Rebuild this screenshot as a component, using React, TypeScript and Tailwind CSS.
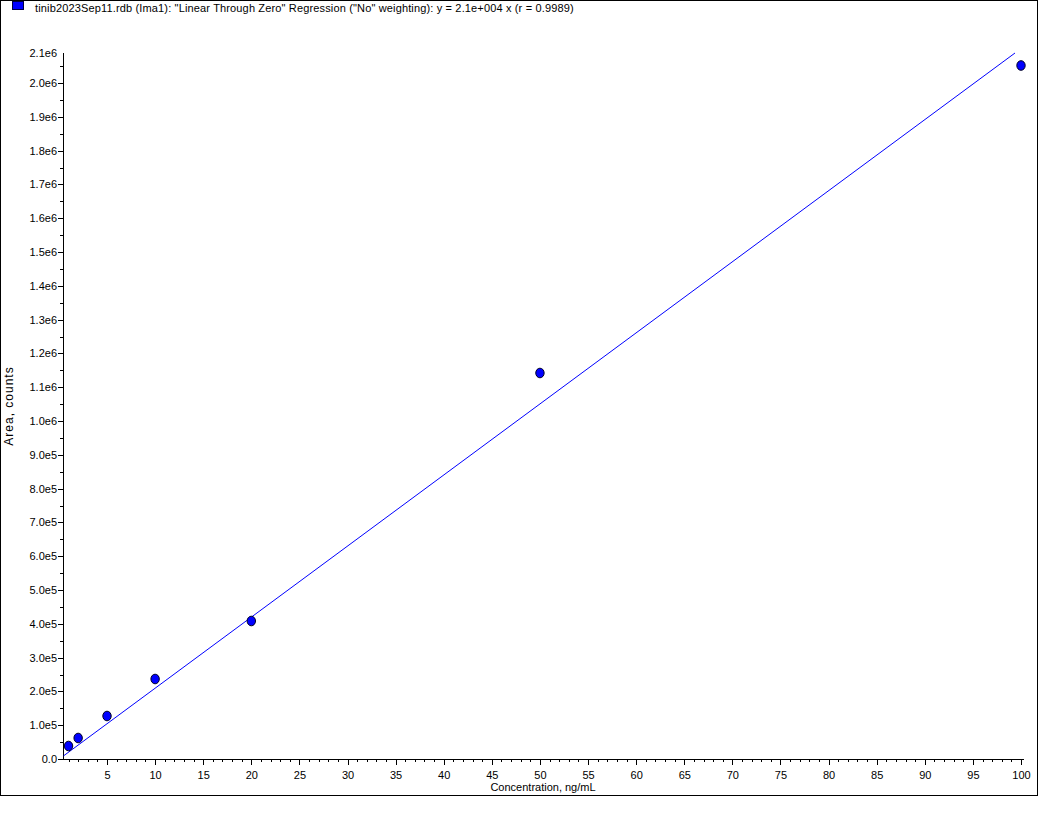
import React from "react";

const X0 = 58.9;
const XS = 9.621;
const Y0 = 759;
const YS = 33.8 / 1e5;
const YTOP = 53;

const px = (c: number) => X0 + c * XS;
const py = (a: number) => Y0 - a * YS;

// measured pixel heights of the calibration points
const points = [
  { c: 1, y: 746 },
  { c: 2, y: 738 },
  { c: 5, y: 716 },
  { c: 10, y: 679 },
  { c: 20, y: 621 },
  { c: 50, y: 373 },
  { c: 100, y: 65.5 },
];

const yLabels = Array.from({ length: 22 }, (_, i) => {
  if (i === 0) return "0.0";
  if (i < 10) return `${i}.0e5`;
  return `${(i / 10).toFixed(1)}e6`;
});

const font = "'Liberation Sans', Arial, sans-serif";

const Chart = () => {
  const minor = Array.from({ length: 100 }, (_, i) => i + 1).filter((c) => c % 5 !== 0);
  const major = Array.from({ length: 20 }, (_, i) => (i + 1) * 5);
  return (
    <svg width={1036} height={779} viewBox="1 16 1036 779" className="block">
      {/* axes */}
      <g stroke="#000" strokeWidth={1} shapeRendering="crispEdges">
        <line x1={63.5} y1={YTOP} x2={63.5} y2={759.5} />
        <line x1={63} y1={759.5} x2={1024} y2={759.5} />
        {yLabels.slice(0, 21).map((_, i) => (
          <line key={`ym${i}`} x1={58} y1={Math.round(py(i * 1e5)) + 0.5} x2={63} y2={Math.round(py(i * 1e5)) + 0.5} />
        ))}
        {yLabels.slice(0, 21).map((_, i) => (
          <line key={`yn${i}`} x1={60} y1={Math.round(py(i * 1e5 + 5e4)) + 0.5} x2={63} y2={Math.round(py(i * 1e5 + 5e4)) + 0.5} />
        ))}
        {minor.map((c) => (
          <line key={`xm${c}`} x1={Math.round(px(c)) + 0.5} y1={760} x2={Math.round(px(c)) + 0.5} y2={762} />
        ))}
        {major.map((c) => (
          <line key={`xM${c}`} x1={Math.round(px(c)) + 0.5} y1={760} x2={Math.round(px(c)) + 0.5} y2={765} />
        ))}
      </g>
      {/* tick labels */}
      <g fill="#000" fontSize={11} style={{ fontFamily: font }}>
        {yLabels.map((l, i) => (
          <text key={l} x={57} y={Math.max(py(i * 1e5), YTOP) + 4} textAnchor="end">
            {l}
          </text>
        ))}
        {major.map((c) => (
          <text key={c} x={px(c) + 0.5} y={779} textAnchor="middle">
            {c}
          </text>
        ))}
        <text x={543} y={791} textAnchor="middle">
          Concentration, ng/mL
        </text>
        <text
          x={13}
          y={406}
          textAnchor="middle"
          transform="rotate(-90 13 406)"
          fontSize={12}
          letterSpacing={1}
        >
          Area, counts
        </text>
      </g>
      {/* regression line */}
      <line x1={63.5} y1={755.9} x2={1015} y2={YTOP} stroke="#0000ff" strokeWidth={1} />
      {/* data points */}
      {points.map((p) => (
        <ellipse key={p.c} cx={px(p.c)} cy={p.y} rx={4.2} ry={4.8} fill="#0000ff" stroke="#000022" strokeWidth={1} />
      ))}
    </svg>
  );
};

export default function App() {
  return (
    <div className="w-[1038px] h-[796px] border border-black bg-white overflow-hidden">
      <div className="flex items-start h-[15px] pl-[11px]">
        <div className="w-[12px] h-[9px] bg-[#0000ff] border border-[#000044]" />
        <span
          className="ml-[11px] text-[11px] leading-[14px] tracking-[0.15px] text-black whitespace-nowrap"
          style={{ fontFamily: font }}
        >
          tinib2023Sep11.rdb (Ima1): "Linear Through Zero" Regression ("No" weighting): y = 2.1e+004 x (r = 0.9989)
        </span>
      </div>
      <Chart />
    </div>
  );
}
